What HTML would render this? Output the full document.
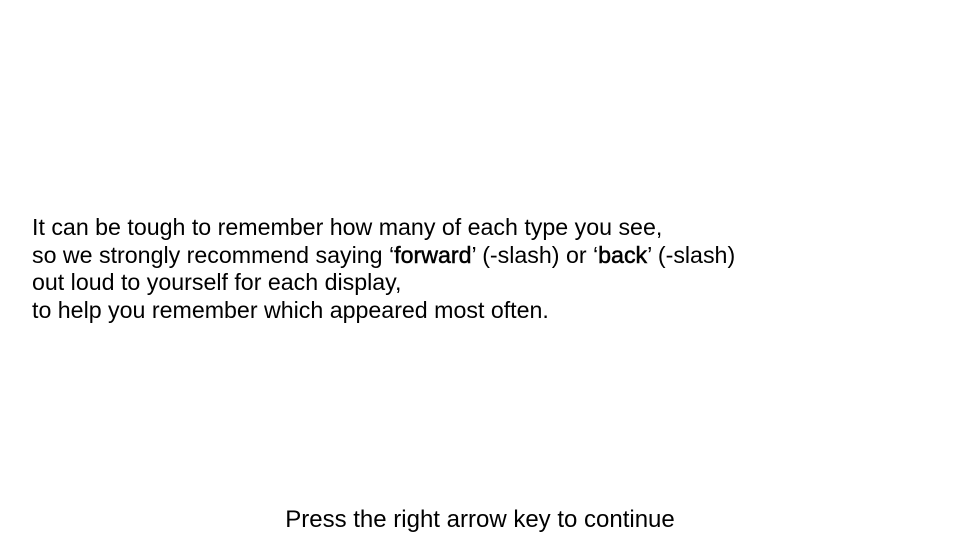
<!DOCTYPE html>
<html><head><meta charset="utf-8"><style>
html,body{margin:0;padding:0;background:#fff;}
body{width:960px;height:540px;position:relative;overflow:hidden;font-family:"Liberation Sans",sans-serif;color:#000;}
.main{position:absolute;left:32px;top:214px;font-size:23.2px;line-height:27.6px;white-space:nowrap;}
.main b{font-weight:normal;-webkit-text-stroke:0.5px #000;}
.bot{position:absolute;left:0;width:960px;top:506px;text-align:center;font-size:24px;line-height:28px;}
</style></head><body>
<div class="main">It can be tough to remember how many of each type you see,<br>so we strongly recommend saying ‘<b>forward</b>’ (-slash) or ‘<b>back</b>’ (-slash)<br>out loud to yourself for each display,<br>to help you remember which appeared most often.</div>
<div class="bot">Press the right arrow key to continue</div>
</body></html>
